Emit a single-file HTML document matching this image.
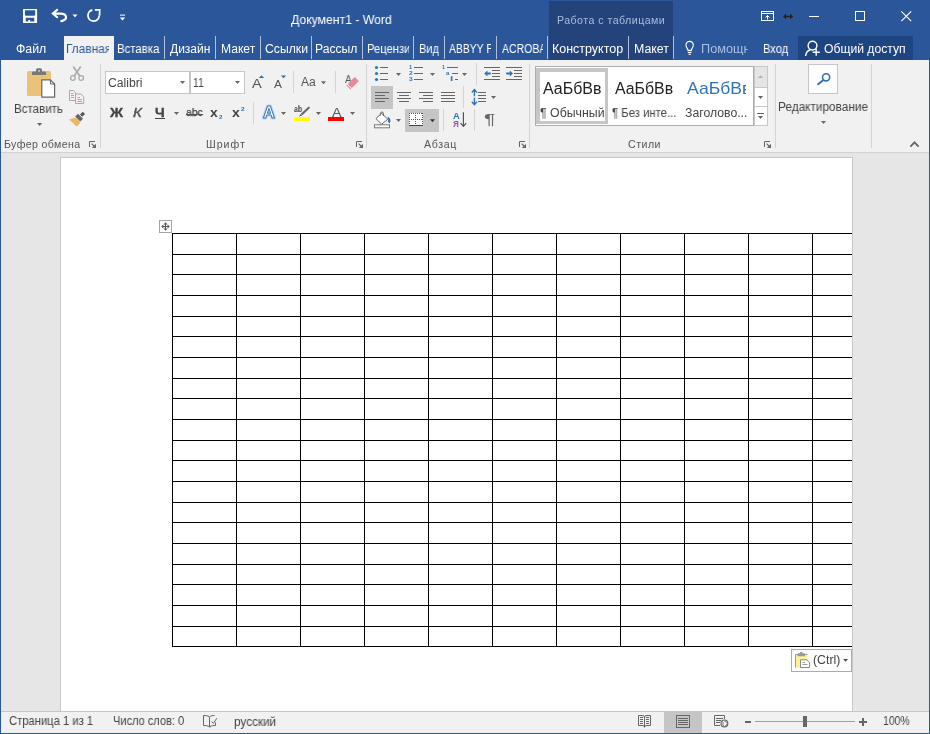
<!DOCTYPE html>
<html lang="ru"><head><meta charset="utf-8"><title>Документ1 - Word</title>
<style>
html,body{margin:0;padding:0;}
body{width:930px;height:734px;overflow:hidden;position:relative;background:#2b579a;font-family:"Liberation Sans",sans-serif;}
.a{position:absolute;}
.t{position:absolute;white-space:nowrap;line-height:1;transform-origin:0 0;will-change:transform;}
#ribbon{left:1px;top:60px;width:928px;height:92px;background:#f1f1f1;}
#ribline{left:1px;top:152px;width:928px;height:1px;background:#d2d2d2;}
#doc{left:1px;top:153px;width:928px;height:558px;background:#e6e6e6;}
#page{left:60px;top:157px;width:791px;height:553px;background:#fff;border:1px solid #c8c8c8;border-bottom:none;box-sizing:content-box;}
#status{left:1px;top:711px;width:928px;height:22px;background:#f1f1f1;border-top:1px solid #c6c6c6;box-sizing:border-box;}
.vs{position:absolute;width:1px;background:#d4d4d4;}
.ts{position:absolute;width:1px;background:#b0c0dc;top:36px;height:23px;}
.hl{background:#c5c5c5;}
.l{position:absolute;background:#000;}
svg{position:absolute;left:0;top:0;}
</style></head><body>
<div class="a" style="left:549px;top:1px;width:124px;height:59px;background:#24437b;"></div>
<div class="a" style="left:798px;top:36px;width:115px;height:24px;background:#1d4582;"></div>
<div class="a" style="left:64px;top:36px;width:50px;height:24px;background:#f1f1f1;"></div>
<div class="ts" style="left:164px"></div><div class="ts" style="left:215px"></div><div class="ts" style="left:260px"></div>
<div class="ts" style="left:311px"></div><div class="ts" style="left:362px"></div><div class="ts" style="left:413px"></div>
<div class="ts" style="left:444px"></div><div class="ts" style="left:496px"></div><div class="ts" style="left:547px"></div>
<div class="ts" style="left:628px"></div><div class="ts" style="left:673px"></div>
<div class="a" id="ribbon"></div><div class="a" id="ribline"></div>
<div class="a" id="doc"></div>
<div class="a" id="page"></div>
<div class="a" id="status"></div>
<!-- ribbon group separators -->
<div class="vs" style="left:100px;top:64px;height:84px"></div>
<div class="vs" style="left:366px;top:64px;height:84px"></div>
<div class="vs" style="left:529px;top:64px;height:84px"></div>
<div class="vs" style="left:775px;top:64px;height:84px"></div>
<div class="vs" style="left:871px;top:64px;height:84px"></div>
<!-- small separators -->
<div class="vs" style="left:293px;top:71px;height:22px"></div>
<div class="vs" style="left:335px;top:71px;height:22px"></div>
<div class="vs" style="left:253px;top:102px;height:22px"></div>
<div class="vs" style="left:476px;top:63px;height:22px"></div>
<div class="vs" style="left:463px;top:86px;height:22px"></div>
<div class="vs" style="left:443px;top:109px;height:22px"></div>
<div class="vs" style="left:474px;top:109px;height:22px"></div>
<!-- combos -->
<div class="a" style="left:105px;top:71px;width:85px;height:23px;background:#fff;border:1px solid #c6c6c6;box-sizing:border-box;"></div>
<div class="a" style="left:190px;top:71px;width:55px;height:23px;background:#fff;border:1px solid #c6c6c6;box-sizing:border-box;"></div>
<!-- highlights -->
<div class="a hl" style="left:371px;top:86px;width:22px;height:23px;"></div>
<div class="a hl" style="left:405px;top:109px;width:34px;height:23px;"></div>
<!-- styles gallery -->
<div class="a" style="left:535px;top:66px;width:219px;height:60px;background:#fff;border:1px solid #abadb3;box-sizing:border-box;"></div>
<div class="a" style="left:536px;top:68px;width:72px;height:56px;border:solid #c6c6c6;border-width:4px 3px 3px 4px;box-sizing:border-box;"></div>
<div class="a" style="left:754px;top:66px;width:14px;height:22px;background:#e5e5e5;border:1px solid #c8c8c8;box-sizing:border-box;"></div>
<div class="a" style="left:754px;top:87px;width:14px;height:20px;background:#fff;border:1px solid #c8c8c8;box-sizing:border-box;"></div>
<div class="a" style="left:754px;top:106px;width:14px;height:20px;background:#fff;border:1px solid #c8c8c8;box-sizing:border-box;"></div>
<!-- editing button -->
<div class="a" style="left:808px;top:64px;width:30px;height:30px;background:#fdfdfd;border:1px solid #c6c6c6;box-sizing:border-box;"></div>
<!-- status selected view -->
<div class="a hl" style="left:664px;top:712px;width:38px;height:21px;"></div>
<!-- table -->
<div class="a" id="tblclip" style="left:61px;top:157px;width:791px;height:554px;overflow:hidden;">
<div class="l" style="left:111px;top:76px;width:700px;height:1px"></div>
<div class="l" style="left:111px;top:97px;width:700px;height:1px"></div>
<div class="l" style="left:111px;top:117px;width:700px;height:1px"></div>
<div class="l" style="left:111px;top:138px;width:700px;height:1px"></div>
<div class="l" style="left:111px;top:159px;width:700px;height:1px"></div>
<div class="l" style="left:111px;top:179px;width:700px;height:1px"></div>
<div class="l" style="left:111px;top:200px;width:700px;height:1px"></div>
<div class="l" style="left:111px;top:221px;width:700px;height:1px"></div>
<div class="l" style="left:111px;top:241px;width:700px;height:1px"></div>
<div class="l" style="left:111px;top:262px;width:700px;height:1px"></div>
<div class="l" style="left:111px;top:283px;width:700px;height:1px"></div>
<div class="l" style="left:111px;top:303px;width:700px;height:1px"></div>
<div class="l" style="left:111px;top:324px;width:700px;height:1px"></div>
<div class="l" style="left:111px;top:345px;width:700px;height:1px"></div>
<div class="l" style="left:111px;top:365px;width:700px;height:1px"></div>
<div class="l" style="left:111px;top:386px;width:700px;height:1px"></div>
<div class="l" style="left:111px;top:407px;width:700px;height:1px"></div>
<div class="l" style="left:111px;top:427px;width:700px;height:1px"></div>
<div class="l" style="left:111px;top:448px;width:700px;height:1px"></div>
<div class="l" style="left:111px;top:469px;width:700px;height:1px"></div>
<div class="l" style="left:111px;top:489px;width:700px;height:1px"></div>
<div class="l" style="left:111px;top:76px;width:1px;height:414px"></div>
<div class="l" style="left:175px;top:76px;width:1px;height:414px"></div>
<div class="l" style="left:239px;top:76px;width:1px;height:414px"></div>
<div class="l" style="left:303px;top:76px;width:1px;height:414px"></div>
<div class="l" style="left:367px;top:76px;width:1px;height:414px"></div>
<div class="l" style="left:431px;top:76px;width:1px;height:414px"></div>
<div class="l" style="left:495px;top:76px;width:1px;height:414px"></div>
<div class="l" style="left:559px;top:76px;width:1px;height:414px"></div>
<div class="l" style="left:623px;top:76px;width:1px;height:414px"></div>
<div class="l" style="left:687px;top:76px;width:1px;height:414px"></div>
<div class="l" style="left:751px;top:76px;width:1px;height:414px"></div>
</div>
<!-- table handle -->
<div class="a" style="left:159px;top:220px;width:13px;height:13px;background:#fff;border:1px solid #a6a6a6;box-sizing:border-box;"></div>
<!-- paste options -->
<div class="a" style="left:791px;top:649px;width:61px;height:23px;background:#fdfdfd;border:1px solid #ababab;box-sizing:border-box;"></div>
<span class="t" style="left:291.20px;top:13.00px;font-size:13px;color:#fff;transform:scaleX(0.9390);">Документ1 - Word</span>
<span class="t" style="left:556.85px;top:14.70px;font-size:10.6px;color:#a9bcde;letter-spacing:0.479px;">Работа с таблицами</span>
<span class="t" style="left:15.53px;top:43.00px;font-size:12px;color:#fff;transform:scaleX(1.0250);">Файл</span>
<span class="t" style="left:66.21px;top:43.00px;font-size:12px;color:#2b579a;transform:scaleX(0.9882);width:43.50px;overflow:hidden;">Главная</span>
<span class="t" style="left:117.05px;top:43.00px;font-size:12px;color:#fff;transform:scaleX(0.9486);">Вставка</span>
<span class="t" style="left:170.00px;top:43.00px;font-size:12px;color:#fff;">Дизайн</span>
<span class="t" style="left:220.69px;top:43.00px;font-size:12px;color:#fff;transform:scaleX(1.0076);">Макет</span>
<span class="t" style="left:264.79px;top:43.00px;font-size:12px;color:#fff;transform:scaleX(1.0171);">Ссылки</span>
<span class="t" style="left:315.49px;top:43.00px;font-size:12px;color:#fff;transform:scaleX(1.0125);">Рассыл</span>
<span class="t" style="left:366.87px;top:43.00px;font-size:12px;color:#fff;transform:scaleX(0.9333);width:45.14px;overflow:hidden;">Рецензи</span>
<span class="t" style="left:418.98px;top:43.00px;font-size:12px;color:#fff;transform:scaleX(0.9171);">Вид</span>
<span class="t" style="left:449.30px;top:43.00px;font-size:12px;color:#fff;transform:scaleX(0.8629);width:49.48px;overflow:hidden;">ABBYY F</span>
<span class="t" style="left:501.60px;top:43.00px;font-size:12px;color:#fff;transform:scaleX(0.8738);width:46.81px;overflow:hidden;">ACROBA</span>
<span class="t" style="left:552.46px;top:43.00px;font-size:12px;color:#fff;transform:scaleX(1.0403);">Конструктор</span>
<span class="t" style="left:633.77px;top:43.00px;font-size:12px;color:#fff;transform:scaleX(1.0290);">Макет</span>
<span class="t" style="left:700.74px;top:43.00px;font-size:12px;color:#a9bfe3;transform:scaleX(1.0590);width:44.15px;overflow:hidden;">Помощн</span>
<span class="t" style="left:762.87px;top:43.00px;font-size:12px;color:#fff;transform:scaleX(0.9269);">Вход</span>
<span class="t" style="left:824.29px;top:43.00px;font-size:12px;color:#fff;transform:scaleX(1.0120);">Общий доступ</span>
<span class="t" style="left:14.34px;top:103.00px;font-size:12px;color:#444;transform:scaleX(0.9636);">Вставить</span>
<span class="t" style="left:3.85px;top:138.70px;font-size:10.6px;color:#555;letter-spacing:0.377px;">Буфер обмена</span>
<span class="t" style="left:107.89px;top:77.00px;font-size:12px;color:#444;transform:scaleX(1.0107);">Calibri</span>
<span class="t" style="left:193.16px;top:76.85px;font-size:12.3px;color:#444;transform:scaleX(0.8444);">11</span>
<span class="t" style="left:206.25px;top:138.70px;font-size:10.6px;color:#555;letter-spacing:1.000px;">Шрифт</span>
<span class="t" style="left:424.30px;top:138.70px;font-size:10.6px;color:#555;letter-spacing:0.625px;">Абзац</span>
<span class="t" style="left:628.30px;top:138.70px;font-size:10.6px;color:#555;letter-spacing:0.487px;">Стили</span>
<span class="t" style="left:778.42px;top:101.00px;font-size:12px;color:#444;transform:scaleX(0.9844);">Редактирование</span>
<span class="t" style="left:542.90px;top:80.70px;font-size:15.6px;color:#222;transform:scaleX(1.0230);">АаБбВв</span>
<span class="t" style="left:615.00px;top:80.70px;font-size:15.6px;color:#222;transform:scaleX(1.0177);">АаБбВв</span>
<span class="t" style="left:687.00px;top:80.00px;font-size:17px;color:#2e74b5;transform:scaleX(1.0335);width:57.38px;overflow:hidden;">АаБбВв</span>
<span class="t" style="left:539.79px;top:107.00px;font-size:12px;color:#444;transform:scaleX(1.0276);">¶ Обычный</span>
<span class="t" style="left:612.03px;top:107.00px;font-size:12px;color:#444;transform:scaleX(0.9438);">¶ Без инте...</span>
<span class="t" style="left:684.99px;top:107.00px;font-size:12px;color:#444;transform:scaleX(1.0202);">Заголово...</span>
<span class="t" style="left:109.50px;top:106.75px;font-size:12.5px;color:#444;transform:scaleX(1.1556);font-weight:bold;-webkit-text-stroke:0.3px #444;">Ж</span>
<span class="t" style="left:132.50px;top:106.75px;font-size:12.5px;color:#555;transform:scaleX(1.2000);font-style:italic;-webkit-text-stroke:0.4px #555;">К</span>
<span class="t" style="left:154.87px;top:106.75px;font-size:12.5px;color:#444;transform:scaleX(1.1034);font-weight:bold;-webkit-text-stroke:0.3px #444;">Ч</span>
<span class="t" style="left:185.65px;top:107.25px;font-size:11.5px;color:#3a3a3a;transform:scaleX(0.9014);-webkit-text-stroke:0.25px #3a3a3a;">abc</span>
<span class="t" style="left:210.03px;top:106.00px;font-size:13px;color:#444;transform:scaleX(1.0815);font-weight:bold;">x</span>
<span class="t" style="left:218.74px;top:114.00px;font-size:6px;color:#2e74b5;transform:scaleX(1.0333);font-weight:bold;">2</span>
<span class="t" style="left:231.83px;top:106.00px;font-size:13px;color:#444;transform:scaleX(1.0815);font-weight:bold;">x</span>
<span class="t" style="left:240.53px;top:106.00px;font-size:6px;color:#2e74b5;transform:scaleX(1.1000);font-weight:bold;">2</span>
<span class="t" style="left:251.50px;top:76.65px;font-size:13.7px;color:#555;transform:scaleX(1.0667);">A</span>
<span class="t" style="left:274.00px;top:78.65px;font-size:10.7px;color:#555;transform:scaleX(1.1143);">A</span>
<span class="t" style="left:301.40px;top:76.00px;font-size:12px;color:#555;transform:scaleX(0.9898);">Aa</span>
<span class="t" style="left:345.00px;top:73.75px;font-size:10.5px;color:#555;transform:scaleX(0.9286);">A</span>
<span class="t" style="left:331.70px;top:105.85px;font-size:13.3px;color:#555;transform:scaleX(1.0743);">A</span>
<span class="t" style="left:293.79px;top:104.70px;font-size:8.6px;color:#444;transform:scaleX(0.8211);font-weight:bold;">ab</span>
<span class="t" style="left:452.75px;top:110.80px;font-size:9.4px;color:#2e74b5;transform:scaleX(0.9920);font-weight:bold;">А</span>
<span class="t" style="left:452.78px;top:118.80px;font-size:9.4px;color:#8e4fae;transform:scaleX(0.8667);font-weight:bold;">Я</span>
<span class="t" style="left:484.27px;top:111.75px;font-size:14.5px;color:#666;transform:scaleX(1.4519);">¶</span>
<span class="t" style="left:408.56px;top:65.15px;font-size:5.7px;color:#2e74b5;transform:scaleX(0.9455);font-weight:bold;">1</span>
<span class="t" style="left:408.51px;top:71.15px;font-size:5.7px;color:#2e74b5;transform:scaleX(1.1636);font-weight:bold;">2</span>
<span class="t" style="left:408.51px;top:77.15px;font-size:5.7px;color:#2e74b5;transform:scaleX(1.1636);font-weight:bold;">3</span>
<span class="t" style="left:441.78px;top:65.30px;font-size:5.4px;color:#2e74b5;transform:scaleX(0.8727);font-weight:bold;">1</span>
<span class="t" style="left:445.76px;top:70.00px;font-size:6px;color:#2e74b5;transform:scaleX(0.9538);font-weight:bold;">a</span>
<span class="t" style="left:449.87px;top:76.35px;font-size:6.3px;color:#2e74b5;transform:scaleX(1.8667);font-weight:bold;">i</span>
<span class="t" style="left:9.23px;top:715.00px;font-size:12px;color:#444;transform:scaleX(0.9352);">Страница 1 из 1</span>
<span class="t" style="left:112.98px;top:715.00px;font-size:12px;color:#444;transform:scaleX(0.9197);">Число слов: 0</span>
<span class="t" style="left:233.97px;top:716.00px;font-size:12px;color:#444;transform:scaleX(0.9783);">русский</span>
<span class="t" style="left:883.13px;top:715.00px;font-size:12px;color:#444;transform:scaleX(0.8718);">100%</span>
<span class="t" style="left:813.23px;top:654.00px;font-size:12px;color:#444;transform:scaleX(1.0257);">(Ctrl)</span>
<svg width="930" height="734" viewBox="0 0 930 734">
<path fill-rule="evenodd" fill="#fff" d="M23 9.4Q23 8.9 23.5 8.9H36.6Q37.1 8.9 37.1 9.4V22.5Q37.1 23 36.6 23H23.5Q23 23 23 22.5ZM24.9 10.3V15.1L25.6 15.7H34.5L35.2 15.1V10.3ZM25.7 17.8V21.6H28.2V20H30.2V21.6H34.3V17.8Z"/>
<path d="M57.8 9.2L52.8 13.6L57.8 17.8M53.2 13.6H61C66.4 13.6 67.4 18.2 64.2 20C63 20.7 61.8 21.1 60.4 21.3" fill="none" stroke="#fff" stroke-width="2.1"/>
<path d="M72.5 14.5h5l-2.5 2.7z" fill="#fff"/>
<path d="M92.3 10A5.6 5.6 0 1 0 99.2 15.6" fill="none" stroke="#fff" stroke-width="1.8"/><path d="M94.8 9.8H99.6V15.6" fill="none" stroke="#fff" stroke-width="1.8"/>
<rect x="120" y="14.6" width="5" height="1" fill="#fff"/><path d="M119.8 17.4h5.4l-2.7 3z" fill="#fff"/>
<g fill="none" stroke="#fff" stroke-width="1"><rect x="761.5" y="11.5" width="12" height="9"/><path d="M761.5 13.5H773.5"/><path d="M767.5 19.5V15.5M765.5 17.5L767.5 15.5L769.5 17.5"/></g>
<path d="M783 16.5l3.2-3v2.2h3.8v-2.2l3.2 3-3.2 3v-2.2h-3.8v2.2z" fill="#222"/>
<rect x="809" y="16" width="10" height="1" fill="#fff"/>
<rect x="855.5" y="11.5" width="9" height="9" fill="none" stroke="#fff" stroke-width="1"/>
<path d="M901.3 11.3L911.2 21.2M911.2 11.3L901.3 21.2" stroke="#fff" stroke-width="1.1"/>
<g fill="none" stroke="#fff" stroke-width="1.1"><path d="M688 50.4C688 48.6 686 47.8 686 45A3.65 3.65 0 0 1 693.3 45C693.3 47.8 691.3 48.6 691.3 50.4Z"/><path d="M687.8 52.4H691.5M688.4 54.2H690.9"/></g>
<g fill="none" stroke="#fff" stroke-width="1.4"><circle cx="812.5" cy="45.6" r="4.4"/><path d="M805.6 56C806 52.6 808 50.4 810.6 49.8"/><path d="M816.2 48.6V55.8M812.6 52.2H819.8"/></g>
<rect x="27" y="71" width="24" height="25" rx="1.6" fill="#eac37b"/>
<path d="M32 75V72.8Q32 71.6 33.2 71.6H36V70Q36 68.3 37.7 68.3H40.3Q42 68.3 42 70V71.6H44.8Q46 71.6 46 72.8V75Z" fill="#777"/><rect x="38.3" y="70.2" width="1.4" height="1.4" fill="#f1f1f1"/>
<path d="M41.8 79.8H50.4L54.6 84V97.2H41.8Z" fill="#fff" stroke="#666" stroke-width="1.2"/><path d="M50.4 79.8V84H54.6" fill="none" stroke="#666" stroke-width="1"/>
<path d="M37 123h5.2l-2.6 3z" fill="#666"/>
<g fill="none" stroke="#aaa" stroke-width="1.3"><circle cx="72.9" cy="78" r="2.3"/><circle cx="81.2" cy="78" r="2.3"/><path d="M74.2 76L80.8 66.6M79.8 76L73.2 66.6" stroke-width="1.7"/></g>
<g fill="#f6eef2" stroke="#aaa" stroke-width="1"><path d="M69.5 90.5H73.5L75.5 92.5V100.5H69.5Z"/><path d="M75.5 94H81L83.7 96.7V103.5H75.5Z"/></g><g stroke="#aaa" stroke-width="1"><path d="M71 93.5H73.5M71 95.5H74M71 97.5H74M77.5 97.5H80M77.5 99.5H82M77.5 101.5H82"/></g>
<path d="M69.2 119.4L76.8 126.8L80.4 122.2L75.6 117.4Z" fill="#eab765"/><path d="M75.2 116.6L78 113.8L83 118.8L80.2 121.6Z" fill="#666"/><path d="M80 114.6L82.8 111.8L85 114L82.2 116.8Z" fill="#555"/>
<path d="M89.5 147V141.5H95" fill="none" stroke="#666" stroke-width="1"/><path d="M91.6 143.6L94 146" stroke="#666" stroke-width="1.1"/><path d="M96 143.8V148H91.8z" fill="#666"/>
<path d="M180 81h5l-2.5 3z" fill="#666"/>
<path d="M235 81h5l-2.5 3z" fill="#666"/>
<path d="M258.8 78L261.5 75.2L264.2 78Z" fill="#2e74b5"/>
<path d="M280.8 75.4H286.2L283.5 78.2Z" fill="#2e74b5"/>
<path d="M321 81.3h5l-2.5 3z" fill="#666"/>
<path d="M354.7 76.9L358.9 80.9L351.9 88.1L347.6 84.1Z" fill="#e8899d"/><path d="M347 84.8L351.2 88.8L350.4 89.6L346.3 85.6Z" fill="#e8899d"/>
<path d="M174 112h5l-2.5 3z" fill="#666"/>
<path d="M281 112h5l-2.5 3z" fill="#666"/>
<path d="M316 112h5l-2.5 3z" fill="#666"/>
<path d="M350 112h5l-2.5 3z" fill="#666"/>
<path d="M308.6 106.4L310.2 107.8L302.4 115.2L300.8 113.8Z" fill="#666"/><path d="M300.6 114L302.2 115.4L299 116.6Z" fill="#555"/>
<rect x="294" y="117" width="16" height="4" fill="#ffff00"/>
<rect x="328" y="117" width="16" height="4" fill="#ff0000"/>
<rect x="155" y="118" width="10" height="1" fill="#444"/>
<rect x="186" y="114" width="17" height="1" fill="#555"/>
<text x="262.9" y="118" font-family="Liberation Sans, sans-serif" font-size="16.5" font-weight="bold" fill="none" stroke="#9dc3e6" stroke-opacity=".55" stroke-width="3.2" stroke-linejoin="round">A</text><text x="262.9" y="118" font-family="Liberation Sans, sans-serif" font-size="16.5" font-weight="bold" fill="#fff" stroke="#2e74b5" stroke-width="0.9" stroke-linejoin="round">A</text>
<path d="M356.5 147V141.5H362" fill="none" stroke="#666" stroke-width="1"/><path d="M358.6 143.6L361 146" stroke="#666" stroke-width="1.1"/><path d="M363 143.8V148H358.8z" fill="#666"/>
<circle cx="376.5" cy="67.5" r="1.6" fill="#2e74b5"/>
<rect x="380" y="67" width="8" height="1" fill="#666"/>
<rect x="414" y="67" width="9" height="1" fill="#666"/>
<circle cx="376.5" cy="73.5" r="1.6" fill="#2e74b5"/>
<rect x="380" y="73" width="8" height="1" fill="#666"/>
<rect x="414" y="73" width="9" height="1" fill="#666"/>
<circle cx="376.5" cy="79.5" r="1.6" fill="#2e74b5"/>
<rect x="380" y="79" width="8" height="1" fill="#666"/>
<rect x="414" y="79" width="9" height="1" fill="#666"/>
<path d="M396 73h5l-2.5 3z" fill="#666"/>
<path d="M430 73h5l-2.5 3z" fill="#666"/>
<path d="M462 73h5l-2.5 3z" fill="#666"/>
<rect x="447" y="67" width="11" height="1" fill="#666"/>
<rect x="452" y="73" width="6" height="1" fill="#666"/>
<rect x="455" y="79" width="3" height="1" fill="#666"/>
<rect x="484" y="67" width="16" height="1" fill="#666"/>
<rect x="506" y="67" width="16" height="1" fill="#666"/>
<rect x="484" y="79" width="16" height="1" fill="#666"/>
<rect x="506" y="79" width="16" height="1" fill="#666"/>
<rect x="492" y="70" width="8" height="1" fill="#666"/>
<rect x="514" y="70" width="8" height="1" fill="#666"/>
<rect x="492" y="73" width="8" height="1" fill="#666"/>
<rect x="514" y="73" width="8" height="1" fill="#666"/>
<rect x="492" y="76" width="8" height="1" fill="#666"/>
<rect x="514" y="76" width="8" height="1" fill="#666"/>
<path d="M484.2 73.5L487.4 70.6V72.6H490.8V74.4H487.4V76.4Z" fill="#2e74b5"/>
<path d="M513 73.5L509.8 70.6V72.6H506.2V74.4H509.8V76.4Z" fill="#2e74b5"/>
<rect x="375" y="92" width="14" height="1" fill="#666"/>
<rect x="397" y="92" width="14" height="1" fill="#666"/>
<rect x="419" y="92" width="14" height="1" fill="#666"/>
<rect x="441" y="92" width="14" height="1" fill="#666"/>
<rect x="478" y="92" width="8" height="1" fill="#666"/>
<rect x="375" y="95" width="10" height="1" fill="#666"/>
<rect x="399" y="95" width="10" height="1" fill="#666"/>
<rect x="423" y="95" width="10" height="1" fill="#666"/>
<rect x="441" y="95" width="14" height="1" fill="#666"/>
<rect x="478" y="95" width="8" height="1" fill="#666"/>
<rect x="375" y="98" width="14" height="1" fill="#666"/>
<rect x="397" y="98" width="14" height="1" fill="#666"/>
<rect x="419" y="98" width="14" height="1" fill="#666"/>
<rect x="441" y="98" width="14" height="1" fill="#666"/>
<rect x="478" y="98" width="8" height="1" fill="#666"/>
<rect x="375" y="101" width="10" height="1" fill="#666"/>
<rect x="399" y="101" width="10" height="1" fill="#666"/>
<rect x="423" y="101" width="10" height="1" fill="#666"/>
<rect x="441" y="101" width="14" height="1" fill="#666"/>
<rect x="478" y="101" width="8" height="1" fill="#666"/>
<path d="M474.4 89.8V96.2M471.8 92.5L474.4 89.6L477 92.5M474.4 97.8V104.4M471.8 101.7L474.4 104.6L477 101.7" fill="none" stroke="#2e74b5" stroke-width="1.4"/>
<path d="M491 96h5l-2.5 3z" fill="#666"/>
<path d="M381.7 113.4L387.8 119.2L381.7 124.2L375.9 118.6Z" fill="#fff" stroke="#666" stroke-width="1"/><path d="M380.4 115.6V113.2C380.4 111.6 383.4 111.6 383.4 113.2V116" fill="none" stroke="#666" stroke-width="1"/>
<path d="M387.6 116.8C390.6 118 391.2 120.8 389.8 123.2C388.4 122.8 387.4 121 388.2 119.4Z" fill="#2e74b5"/>
<rect x="374.5" y="124.8" width="15" height="3" fill="#fff" stroke="#777" stroke-width="1"/>
<path d="M396 119h5l-2.5 3z" fill="#666"/>
<rect x="409" y="113" width="14" height="13" fill="#fff"/>
<g stroke="#555" stroke-width="1" stroke-dasharray="1 1"><path d="M409 113.5H423M409 119.5H423M409.5 113V126M415.5 113V126M422.5 113V126"/></g>
<rect x="409" y="125" width="14" height="1" fill="#444"/>
<path d="M430 119.3h5l-2.5 3z" fill="#333"/>
<path d="M463.4 112.2V126" stroke="#555" stroke-width="1.2" fill="none"/><path d="M460.6 123.2L463.4 126.4L466.2 123.2" fill="none" stroke="#555" stroke-width="1.2"/>
<path d="M519.5 147V141.5H525" fill="none" stroke="#666" stroke-width="1"/><path d="M521.6 143.6L524 146" stroke="#666" stroke-width="1.1"/><path d="M526 143.8V148H521.8z" fill="#666"/>
<path d="M757.8 78L760.5 75.2L763.2 78Z" fill="#b4b4b4"/>
<path d="M758 96h5l-2.5 3z" fill="#666"/>
<rect x="757" y="113" width="7" height="1" fill="#666"/>
<path d="M758 116h5l-2.5 3z" fill="#666"/>
<path d="M764.5 147V141.5H770" fill="none" stroke="#666" stroke-width="1"/><path d="M766.6 143.6L769 146" stroke="#666" stroke-width="1.1"/><path d="M771 143.8V148H766.8z" fill="#666"/>
<circle cx="826.1" cy="77.3" r="3.6" fill="none" stroke="#2e74b5" stroke-width="1.6"/><path d="M823.4 80L818 84.2" stroke="#2e74b5" stroke-width="2" stroke-linecap="round"/>
<path d="M821 121h5l-2.5 3z" fill="#666"/>
<path d="M910.4 146.6L914.5 142.3L918.6 146.6" fill="none" stroke="#666" stroke-width="1.8"/>
<path d="M165.5 222.2l2 2.2h-1.5v1.6h1.6v-1.5l2.2 2-2.2 2v-1.5h-1.6v1.6h1.5l-2 2.2-2-2.2h1.5v-1.6h-1.6v1.5l-2.2-2 2.2-2v1.5h1.6v-1.6h-1.5z" fill="#555"/>
<rect x="795" y="654" width="12.6" height="13.6" fill="#fff19a"/><path d="M795.5 667.6V654.5H807.4" fill="none" stroke="#999" stroke-width="1"/>
<path d="M797.6 656.3V654Q797.6 653.3 798.4 653.3H800V652.6Q800 652 800.7 652H801.9Q802.6 652 802.6 652.6V653.3H804.2Q805 653.3 805 654V656.3Z" fill="#999"/>
<path d="M800.5 659.8H806.8L809.6 662.4V667.5H800.5Z" fill="#fff" stroke="#888" stroke-width="1"/><path d="M802.5 662.5H805M802.5 664.5H807.5" stroke="#999" stroke-width="1"/>
<path d="M843.2 659h4.8l-2.4 2.8z" fill="#444"/>
<g fill="none" stroke="#666" stroke-width="1"><path d="M209.5 717V726.5L210 727.5M209.5 716.8C207.5 715.6 205.5 715.5 203.5 715.5V725.5C205.5 725.5 207.5 725.6 209.5 726.8"/><path d="M209.5 716.8C211 715.8 212.6 715.5 214.6 715.5M215.5 722.5V725.5C213.5 725.5 211.5 725.6 209.5 726.8"/><path d="M211.6 721.4L213.4 723.4L216.8 718.2"/></g>
<g fill="none" stroke="#666" stroke-width="1"><path d="M644.5 716.5V727.5M638.5 715.5H642Q644.5 715.5 644.5 717Q644.5 715.5 647 715.5H650.5V725.5H647Q644.5 725.5 644.5 727Q644.5 725.5 642 725.5H638.5Z"/><path d="M640 717.5H643M640 719.5H643M640 721.5H643M640 723.5H643M646 717.5H649M646 719.5H649M646 721.5H649M646 723.5H649"/></g>
<rect x="676.5" y="715.5" width="13" height="12" fill="none" stroke="#666" stroke-width="1"/>
<rect x="678" y="718" width="10" height="1" fill="#666"/>
<rect x="678" y="720" width="10" height="1" fill="#666"/>
<rect x="678" y="722" width="10" height="1" fill="#666"/>
<rect x="678" y="724" width="10" height="1" fill="#666"/>
<path d="M724.5 719V715.5H714.5V725.5H720" fill="none" stroke="#666" stroke-width="1"/>
<rect x="716" y="718" width="7" height="1" fill="#666"/>
<rect x="716" y="720" width="5" height="1" fill="#666"/>
<rect x="716" y="722" width="4" height="1" fill="#666"/>
<circle cx="724.4" cy="723.4" r="3.4" fill="#f1f1f1" stroke="#666" stroke-width="1.2"/><path d="M722 721.6C723.4 722 723.6 723.4 722.6 724.2C723.4 725 723.6 725.8 723.4 726.4M725 720.4C724.6 721.6 725.8 722.4 727.4 722.2M727.4 724.6C726.2 724.4 725.4 725.2 725.8 726.4" fill="none" stroke="#666" stroke-width="0.9"/>
<rect x="745" y="721" width="6" height="2" fill="#666"/>
<rect x="755" y="721" width="100" height="1" fill="#a0a0a0"/>
<rect x="803" y="716" width="4" height="11" fill="#666"/>
<rect x="859" y="721" width="8" height="2" fill="#666"/><rect x="862" y="718" width="2" height="8" fill="#666"/>
</svg>
</body></html>
